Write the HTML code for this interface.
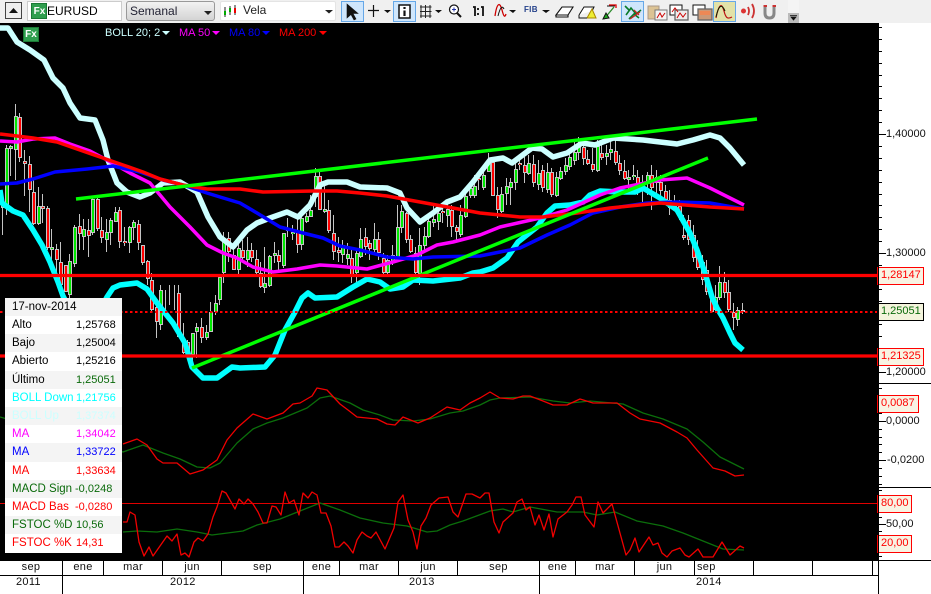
<!DOCTYPE html>
<html><head><meta charset="utf-8"><style>
html,body{margin:0;padding:0;background:#000}
#w{position:relative;width:931px;height:594px;overflow:hidden;background:#000;font:11px "Liberation Sans",sans-serif;color:#000}
#w div{position:absolute;box-sizing:border-box;white-space:nowrap}
svg{position:absolute;left:0;top:0}
.r{left:5px;width:117px;height:18.2px;line-height:18px;padding-left:7px;background:#fff;font-size:11.500px}
.g{background:#f4f4f4}
.r span{position:absolute;left:71px;top:0;font-size:11px}
.m{top:561px;height:14px;line-height:13px;text-align:center;color:#111;letter-spacing:.3px;font-size:11px}
.a{left:886px;color:#111;height:14px;line-height:14px}
.b{left:877px;height:18px;line-height:15px;padding-left:3px;border:1.5px solid #f00;background:#f8f3e3;color:#f00;font-size:11px}
</style></head><body><div id="w">

<div style="left:0;top:0;width:931px;height:23px;background:#f0f0f0"></div>
<div style="left:5px;top:2px;width:17px;height:17px;background:#eee;border:1px solid #444"></div>
<div style="left:27px;top:1px;width:95px;height:20px;background:#fff;border:1px solid #ccc"></div>
<div style="left:47px;top:4px;font-size:12px;line-height:14px">EURUSD</div>
<div style="left:126px;top:1px;width:89px;height:20px;background:linear-gradient(#f2f2f2,#d4d4d4);border:1px solid #999;border-radius:3px"></div>
<div style="left:130px;top:4px;font-size:12px;line-height:14px;color:#223">Semanal</div>
<div style="left:220px;top:1px;width:116px;height:20px;background:#fff;border:1px solid #e4e4e4;border-radius:2px"></div>
<div style="left:243px;top:3px;font-size:12px;line-height:14px;color:#222">Vela</div>
<div style="left:341px;top:1px;width:23px;height:21px;background:#cfe6fc;border:1px solid #66a8e8"></div>
<div style="left:393px;top:1px;width:23px;height:21px;background:#cfe6fc;border:1px solid #66a8e8"></div>
<div style="left:621px;top:1px;width:23px;height:21px;background:#cfe6fc;border:1px solid #66a8e8"></div>
<div style="left:713px;top:1px;width:23px;height:21px;background:#e2e2a8;border:1px solid #66a8e8"></div>
<div style="left:788px;top:0;width:11px;height:13px;background:#f4f4f4"></div>
<div style="left:788px;top:13px;width:11px;height:10px;background:#bbb"></div>
<div style="left:524px;top:4px;font:bold 8px/12px 'Liberation Sans',sans-serif;color:#23408a;letter-spacing:.3px">FIB</div>

<svg width="931" height="594" viewBox="0 0 931 594" fill="none">
<!-- toolbar icons -->
<path d="M9 13L13.500 8L18 13Z" fill="#111"/>
<rect x="31.500" y="3.500" width="15" height="15" fill="#2f9e4e" stroke="#1b7a35"/>
<path d="M204 12L208 16L212 12ZM325 11L329 14.500L333 11Z" fill="#222" transform="translate(0,-1)"/>
<path d="M225 7V17M230 6V15M235 5V15" stroke="#222"/>
<rect x="224" y="11" width="2" height="4" fill="#0a0"/><rect x="229" y="8" width="2" height="4" fill="#0a0"/><rect x="234" y="8" width="2" height="5" fill="#e00"/>
<path d="M347 4V18L351 14.500L354 20L356 19L353 13.500L358 13.500Z" fill="#111" stroke="#111" stroke-width=".6"/>
<path d="M373.500 5V17M368 10.500H379" stroke="#111" stroke-width="1.200"/>
<path d="M384 10L387.500 13L391 10ZM435 10L438.500 13L442 10ZM509 10L513 13L516 10ZM542 10L546 13L550 10Z" fill="#111"/>
<rect x="399" y="5" width="11" height="13" fill="#fff" stroke="#111" stroke-width="1.500"/><path d="M404.500 7V9M404.500 10.500V16" stroke="#111" stroke-width="2.200"/>
<path d="M421 5V18M425.500 5V18M430 5V18M420 7H431.500M420 11.500H431.500M420 16H431.500" stroke="#222"/>
<circle cx="454" cy="9.500" r="4.500" fill="#fff" stroke="#111" stroke-width="1.200"/><path d="M457 13L461 17" stroke="#111" stroke-width="2"/><path d="M452 9.500H456M454 7.500V11.500" stroke="#23a"/>
<path d="M473 7H475V16M481 7H483V16" stroke="#111" stroke-width="1.800"/><path d="M478 8V10M478 13V15" stroke="#111" stroke-width="1.800"/>
<path d="M495 16C497 2 500 2 502 10S505 17 506 14" stroke="#c00" stroke-width="1.300"/><path d="M498 16C500 8 502 5 504 9" stroke="#111"/>
<path d="M556 15L562 7H573L568 15ZM556 15V17H568L568 15" fill="#fff" stroke="#111" stroke-width="1.100"/>
<path d="M579 15L584 7H594L592 11" fill="#fff" stroke="#111"/><path d="M587 18L592 9L596 18Z" fill="#ee3" stroke="#a80"/><path d="M579 15V18H587" stroke="#111"/>
<path d="M604 19L614 7" stroke="#2a8a2a" stroke-width="1.300"/><path d="M607 6H615M603 19L606 13L609 18Z" fill="#2a2" stroke="#111"/><path d="M609 5H616V8" stroke="#d00" stroke-width="1.300"/>
<path d="M625 6L630 11M626 15L631 8L636 14L641 10M629 19L634 14L639 18" stroke="#0a7a2a" stroke-width="1.600"/><path d="M634 10L639 15M630 19L640 12" stroke="#c22" stroke-width="1.300"/>
<rect x="648" y="6" width="11" height="13" fill="#dcc394" stroke="#a98"/><rect x="655" y="10" width="12" height="10" fill="#f4f4f4" stroke="#777"/><path d="M657 18L660 13L662 17L665 13" stroke="#c00"/>
<rect x="670" y="5" width="12" height="10" fill="#fff" stroke="#111"/><rect x="675" y="10" width="13" height="10" fill="#eee" stroke="#666" stroke-width="1.300"/><path d="M672 12L675 8L678 12M677 18L680 13L683 17L686 13" stroke="#c00"/>
<rect x="693" y="5" width="12" height="10" fill="#fff" stroke="#111"/><rect x="698" y="9" width="14" height="11" fill="#c97" stroke="#666" stroke-width="1.300"/><rect x="700" y="11" width="10" height="4" fill="#e85"/>
<path d="M716 18C719 3 722 3 724 11S728 19 732 17" stroke="#b11" stroke-width="1.200"/><path d="M716 17C719 4 722 4 725 11" stroke="#120"/>
<circle cx="743.500" cy="11" r="2.500" fill="#d33"/><path d="M748 7Q750 11 748 15M752 4Q756 11 752 18" stroke="#c33" stroke-width="1.800"/>
<path d="M765 6V13Q765 18 769.500 18T774 13V6" stroke="#888" stroke-width="3"/><path d="M763.500 6H767M772.500 6H776" stroke="#c33" stroke-width="2"/>
<path d="M790 15.500H797M791 17H796L793.500 20Z" fill="#111" stroke="#111" stroke-width=".8"/>

<!-- candles -->
<g transform="translate(-.5,0)" stroke="#c4c4c4"><path d="M3 207V235M7 145V215M11 145V176M16 104V180M20 113V162M25 150V196M30 156V212M34 180V225M39 187V225M43 194V223M48 206V250M52 229V262M57 244V272M61 242V290M66 267V292M70 254V300M75 225V267M80 214V250M84 219V250M89 219V257M93 197V235M98 197V231M102 217V243M107 219V252M111 218V245M116 207V222M120 207V248M125 227V246M130 226V253M134 220V240M139 220V250M143 245V265M148 260V285M152 273V312M157 300V338M161 285V330M166 290V315M170 285V305M175 285V310M179 285V337M184 323V354M188 340V358M193 333V370M197 323V358M202 318V343M207 325V340M211 302V332M216 295V315M220 278V305M224 232V283M229 232V262M234 245V270M239 238V275M243 240V262M248 237V267M252 243V262M257 250V275M261 262V288M265 247V293M270 255V287M275 242V263M279 250V270M284 233V268M288 218V237M293 225V240M298 215V253M302 210V250M307 213V223M311 195V217M316 168V207M320 172V210M325 182V213M329 200V233M334 215V260M339 237V262M343 240V263M348 243V265M352 250V283M357 250V287M361 228V258M366 228V255M370 240V260M375 223V253M379 232V260M384 253V277M388 255V275M393 245V265M398 205V262M402 205V233M407 212V243M411 235V253M416 247V277M420 228V285M425 227V253M429 217V238M434 205V227M439 205V230M443 205V223M448 202V227M452 205V237M457 225V240M461 205V237M466 188V218M471 187V198M475 175V198M479 177V190M484 167V190M489 153V172M493 158V196M498 187V218M502 187V213M507 178V205M511 178V205M516 163V190M520 155V170M525 157V183M529 155V175M534 155V187M539 160V190M543 165V192M548 163V193M552 168V197M557 172V197M561 167V180M566 158V175M570 150V170M575 142V165M579 137V160M584 140V165M588 150V165M593 148V172M598 140V172M602 145V160M607 145V165M611 140V160M616 135V165M620 155V175M625 160V180M629 170V190M634 165V180M638 170V195M643 175V205M648 172V195M652 165V210M657 170V195M661 175V200M666 185V205M670 190V215M675 195V210M680 200V220M684 215V240M689 215V245M694 225V262M698 240V270M703 255V285M707 260V295M712 287V313M716 285V312M720 266V300M725 272V298M729 280V312M734 303V330M738 307V326M743 303V314"/></g>
<g shape-rendering="crispEdges">
<path stroke="#c4c4c4" stroke-width="4" d="M3 205V208M7 148V207M11 146V149M16 116V150M20 117V158M25 161V164M30 164V190M34 192V224M39 206V224M43 206V209M48 208V248M52 247V250M57 249V260M61 262V285M66 265V292M70 261V295M75 227V264M80 226V234M84 229V237M89 230V236M93 199V233M98 199V229M102 230V238M107 232V240M111 220V233M116 212V222M120 210V242M125 241V243M130 227V243M134 222V228M139 224V243M143 245V263M148 261V279M152 280V310M157 307V322M161 290V325M179 293V337M184 340V353M188 342V355M193 333V355M197 327V332M202 327V338M207 332V338M211 312V332M216 303V312M220 277V300M224 240V273M229 238V252M234 255V270M239 248V270M243 250V258M248 250V260M252 250V258M257 259V273M261 273V287M265 283V288M270 256V286M275 253V256M279 255V262M284 233V266M288 228V231M293 232V234M298 232V245M302 218V245M307 216V222M311 210V217M316 176V197M320 176V210M325 209V212M329 210V231M334 233V252M339 250V253M343 245V255M348 254V259M352 258V277M357 253V273M361 239V257M366 237V247M370 243V249M375 239V250M379 239V253M384 258V273M388 260V273M393 255V263M398 227V258M402 211V228M407 213V240M411 239V252M416 253V273M420 245V274M425 236V246M429 221V237M434 219V223M439 213V222M443 211V213M448 209V216M452 210V227M457 227V232M461 215V235M466 196V217M471 188V196M475 186V196M479 178V180M484 175V188M489 160V172M493 162V196M498 195V210M502 194V212M507 186V194M511 182V188M516 169V183M520 163V165M525 165V173M529 163V174M534 164V183M539 173V185M543 170V188M548 172V190M552 172V195M557 177V196M561 171V179M566 165V172M570 157V167M575 152V161M579 145V153M584 147V159M588 159V164M593 164V170M598 146V171M602 153V158M607 153V157M611 149V153M616 151V163M620 163V171M625 171V179M629 177V180M634 175V177M638 177V188M643 183V188M648 175V182M652 175V188M657 177V183M661 182V191M666 191V200M670 200V208M675 205V207M680 206V216M684 235V238M689 220V240M694 235V258M698 250V268M703 262V280M707 270V292M712 297V312M716 297V310M720 282V298M725 282V293M729 292V310M734 312V318M738 310V320M743 310V312"/>
<path stroke="#f00" stroke-width="2" d="M20 118V157M25 162V163M30 165V189M34 193V223M43 207V208M48 209V247M57 250V259M61 263V284M66 266V291M80 227V233M89 231V235M98 200V228M102 231V237M120 211V241M125 242V243M139 225V242M143 246V262M148 262V278M152 281V309M157 308V321M179 294V336M184 341V352M188 343V354M202 328V337M229 239V251M234 256V269M243 251V257M252 251V257M257 260V272M261 274V286M279 256V261M298 233V244M320 177V209M329 211V230M334 234V251M339 251V252M352 259V276M366 238V246M370 244V248M379 240V252M384 259V272M407 214V239M411 240V251M416 254V272M443 212V213M452 211V226M457 228V231M479 179V180M493 163V195M498 196V209M520 164V165M525 166V172M534 165V182M543 171V187M552 173V194M584 148V158M588 160V163M593 165V169M602 154V157M616 152V162M620 164V170M625 172V178M638 178V187M652 176V187M657 178V182M661 183V190M666 192V199M670 201V207M675 206V207M680 207V215M684 236V237M689 221V239M694 236V257M698 251V267M703 263V279M707 271V291M712 298V311M725 283V292M729 293V309M734 313V317M743 311V312"/>
<path stroke="#00e800" stroke-width="2" d="M3 206V207M7 149V206M11 147V148M16 117V149M39 207V223M52 248V249M70 262V294M75 228V263M84 230V236M93 200V232M107 233V239M111 221V232M116 213V221M130 228V242M134 223V227M161 291V324M193 334V354M197 328V331M207 333V337M211 313V331M216 304V311M220 278V299M224 241V272M239 249V269M248 251V259M265 284V287M270 257V285M275 254V255M284 234V265M288 229V230M293 233V234M302 219V244M307 217V221M311 211V216M316 177V196M325 210V211M343 246V254M348 255V258M357 254V272M361 240V256M375 240V249M388 261V272M393 256V262M398 228V257M402 212V227M420 246V273M425 237V245M429 222V236M434 220V222M439 214V221M448 210V215M461 216V234M466 197V216M471 189V195M475 187V195M484 176V187M489 161V171M502 195V211M507 187V193M511 183V187M516 170V182M529 164V173M539 174V184M548 173V189M557 178V195M561 172V178M566 166V171M570 158V166M575 153V160M579 146V152M598 147V170M607 154V156M611 150V152M629 178V179M634 176V177M643 184V187M648 176V181M716 298V309M720 283V297M738 311V319"/>
</g>

<g stroke-linejoin="round" stroke-linecap="butt">
<polyline stroke="#00ffff" stroke-width="5.500" points="0,190 2,203 13,211 23,215 33,230 42,245 50,262 58,282 63,296 70,310 100,310 107,297 113,288 120,285 137,283 147,289 157,303 173,323 185,343 192,367 203,378 217,378 232,367 240,368 265,367 275,355 285,330 295,312 302,298 308,293 315,298 337,297 353,287 367,279 380,282 390,289 403,287 413,280 433,281 460,278 473,273 480,272 493,268 507,258 518,242 537,227 547,213 555,206 570,205 583,202 590,195 600,191 620,192 635,192 643,188 660,198 677,210 690,233 697,250 705,273 712,297 717,308 723,318 730,333 735,343 743,350"/>
<polyline stroke="#ccffff" stroke-width="5.500" points="0,28 8,28 17,42 30,50 44,60 53,78 63,88 70,103 80,118 95,120 103,140 108,160 117,183 127,192 140,197 150,193 163,183 180,182 197,192 208,217 220,237 233,247 247,230 257,223 270,218 287,212 298,217 310,205 320,185 328,182 347,182 360,187 387,188 400,193 407,208 420,222 433,213 447,202 460,197 473,182 490,160 503,158 512,163 532,148 542,149 553,157 567,153 582,143 595,145 613,138 643,140 677,144 693,140 710,135 720,138 730,148 744,165"/>
<polyline stroke="#ff00ff" stroke-width="3.500" points="0,141 17,142 33,139 55,138 70,144 90,151 107,160 130,173 150,183 170,207 190,227 207,245 223,253 237,258 253,267 273,272 297,269 320,265 337,266 367,269 393,262 417,255 437,245 453,242 480,235 500,227 540,218 567,210 600,195 620,188 660,180 687,178 710,188 744,205"/>
<polyline stroke="#0000ff" stroke-width="3.500" points="0,184 17,183 33,179 55,172 87,169 113,166 140,172 163,180 183,185 207,193 220,197 240,203 257,213 280,227 303,233 323,238 340,246 360,250 387,257 413,259 433,257 480,256 520,248 547,235 570,225 593,213 620,207 647,203 677,202 710,203 744,209"/>
<polyline stroke="#ff0000" stroke-width="3.500" points="0,134 17,136 33,138 57,142 77,149 100,157 123,165 143,172 160,179 183,185 207,189 240,189 263,192 313,191 337,191 360,193 387,196 420,202 453,208 480,213 520,217 543,217 577,213 610,208 660,203 710,207 744,209"/>
<path stroke="#00ff00" stroke-width="3.500" d="M76 199L757 119M192 368L708 158"/>
<path stroke="#ff0000" stroke-width="3.200" d="M0 275.500H877M0 356H877"/>
<path stroke="#ff0000" stroke-width="2" stroke-dasharray="2.500 2.500" d="M0 312H877"/>
<path stroke="#e00000" stroke-width="1" d="M0 503.500H877"/>
<polyline stroke="#0b6e0b" stroke-width="1.300" points="0,417 123,452 143,445 163,453 180,459 197,467 210,468 220,463 237,443 253,429 267,423 283,418 307,408 320,398 330,396 350,403 363,410 380,415 393,420 413,421 430,419 450,413 463,411 480,405 490,400 500,398 530,397 553,401 570,403 590,401 623,404 643,413 663,419 687,429 703,442 720,457 744,469"/>
<polyline stroke="#f00000" stroke-width="1.300" points="123,444 137,439 147,445 157,459 163,463 177,463 190,474 203,470 217,460 227,440 237,428 253,414 267,419 283,413 293,404 300,403 312,396 317,388 327,390 340,404 348,410 357,417 377,419 387,424 395,425 403,417 418,423 430,418 447,407 460,410 470,403 480,398 490,392 500,398 513,399 523,396 530,396 543,401 553,405 567,405 580,399 593,403 617,403 630,413 640,419 660,423 677,432 687,438 697,450 713,468 725,471 735,476 744,475"/>
<polyline stroke="#0b6e0b" stroke-width="1.300" points="123,532 137,531 157,532 177,529 197,532 212,535 243,531 257,525 280,519 300,511 320,503 340,510 360,518 383,523 407,526 427,532 437,531 450,525 463,521 490,511 503,509 513,512 530,507 557,512 583,512 597,515 615,512 637,521 663,526 683,533 703,541 723,549 744,550"/>
<polyline stroke="#f00000" stroke-width="1.300" points="123,522 127,522 130,512 135,515 139,542 144,556 149,547 153,556 167,536 172,541 177,534 181,555 185,553 189,557 194,542 198,538 203,541 208,534 213,517 217,507 222,491 226,493 235,509 239,499 244,504 248,499 253,504 258,512 263,523 267,523 272,506 276,507 281,515 285,492 289,503 294,500 299,515 303,493 308,498 312,492 317,495 321,513 326,513 331,526 335,547 339,547 344,542 348,546 353,553 357,540 362,532 367,536 371,538 376,532 385,549 394,528 398,502 403,495 408,520 413,532 417,549 421,526 426,518 431,505 439,498 448,497 453,512 458,517 466,494 472,494 480,498 485,493 489,493 494,522 499,533 503,522 513,513 517,502 522,499 526,510 530,507 535,525 539,515 544,530 549,514 553,537 558,519 567,512 572,505 576,497 581,497 585,515 594,527 598,502 603,513 612,504 626,555 630,550 635,538 639,552 649,537 653,545 658,543 662,553 667,557 672,551 680,548 685,555 689,557 698,549 703,557 713,557 722,542 730,555 740,546 744,548"/>
</g>
</svg>

<!-- legend -->
<div style="left:23px;top:27px;width:16px;height:15px;background:#2f9e4e;border:1px solid #1b7a35;color:#fff;font:bold 10px/13px 'Liberation Sans',sans-serif;text-align:center">Fx</div>
<div style="left:32px;top:4px;width:15px;height:15px;color:#fff;font:bold 10px/15px 'Liberation Sans',sans-serif;text-align:center">Fx</div>
<div style="left:105px;top:26px;color:#ccffff;line-height:14px">BOLL 20; 2</div>
<div style="left:179px;top:26px;color:#ff00ff;line-height:14px">MA 50</div>
<div style="left:229px;top:26px;color:#0000ff;line-height:14px">MA 80</div>
<div style="left:279px;top:26px;color:#ff0000;line-height:14px">MA 200</div>
<svg width="931" height="60"><path d="M162 31H170L166 35Z" fill="#ccffff"/><path d="M212 31H220L216 35Z" fill="#f0f"/><path d="M262 31H270L266 35Z" fill="#00f"/><path d="M319 31H327L323 35Z" fill="#f00"/></svg>

<!-- info panel -->
<div class="r g" style="top:298px;height:18px;">17-nov-2014</div>
<div class="r" style="top:316px">Alto<span>1,25768</span></div>
<div class="r g" style="top:334.200px">Bajo<span>1,25004</span></div>
<div class="r" style="top:352.400px">Abierto<span>1,25216</span></div>
<div class="r g" style="top:370.600px">Último<span style="color:#0a6a0a">1,25051</span></div>
<div class="r" style="top:388.800px;color:#00ffff">BOLL Down<span>1,21756</span></div>
<div class="r g" style="top:407px;color:#ccffff">BOLL Up<span>1,37374</span></div>
<div class="r" style="top:425.200px;color:#ff00ff">MA<span>1,34042</span></div>
<div class="r g" style="top:443.400px;color:#0000ff">MA<span>1,33722</span></div>
<div class="r" style="top:461.600px;color:#ff0000">MA<span>1,33634</span></div>
<div class="r g" style="top:479.800px;color:#0a6a0a">MACD Sign<span style="left:70px">-0,0248</span></div>
<div class="r" style="top:498px;color:#ff0000">MACD Bas<span style="left:70px">-0,0280</span></div>
<div class="r g" style="top:516.200px;color:#0a6a0a">FSTOC %D<span>10,56</span></div>
<div class="r" style="top:534.400px;height:19px;color:#ff0000">FSTOC %K<span>14,31</span></div>

<!-- right axis -->
<div style="left:878px;top:23px;width:53px;height:571px;background:#fff"></div>
<svg width="931" height="594" fill="none"><path stroke="#000" d="M878 27.500H882M878 39.500H882M878 51.500H882M878 63.500H882M878 75.500H882M878 86.500H882M878 98.500H882M878 110.500H882M878 122.500H882M878 134.500H886M878 146.500H882M878 158.500H882M878 170.500H882M878 182.500H882M878 194.500H882M878 205.500H882M878 217.500H882M878 229.500H882M878 241.500H882M878 253.500H886M878 265.500H882M878 289.500H882M878 301.500H882M878 324.500H882M878 336.500H882M878 348.500H882M878 372.500H886M878 383.500H931M878 388.500H882M878 413.500H882M878 421.500H886M878 429.500H882M878 437.500H882M878 444.500H882M878 452.500H882M878 460.500H886M878 468.500H882M878 476.500H882M878 484.500H882M878 487.500H931M878 490.500H882M878 517.500H882M878 524.500H886M878 531.500H882M878 556.500H882"/></svg>
<div class="a" style="top:127px">1,40000</div>
<div class="a" style="top:246px">1,30000</div>
<div class="a" style="top:365px">1,20000</div>
<div class="a" style="top:414px;left:886px">0,0000</div>
<div class="a" style="top:453px;left:887px">-0,0200</div>
<div class="a" style="top:517px;left:886px">50,00</div>
<div class="b" style="top:267px;width:47px">1,28147</div>
<div class="b" style="top:303px;width:47px;border-color:#000;background:#f4f4dc;color:#0a6a0a">1,25051</div>
<div class="b" style="top:348px;width:47px">1,21325</div>
<div class="b" style="top:395px;width:42px">0,0087</div>
<div class="b" style="top:495px;width:35px">80,00</div>
<div class="b" style="top:535px;width:35px">20,00</div>

<!-- date axis -->
<div style="left:0;top:560px;width:878px;height:34px;background:#fff;border-top:1px solid #000"></div>
<svg width="931" height="594" fill="none"><path stroke="#000" d="M0 575.500H878M878 560.500H931M878.500 23V594M62.500 561V594M103.500 561V575M162.500 561V575M221.500 561V575M303.500 561V594M339.500 561V575M398.500 561V575M457.500 561V575M539.500 561V594M575.500 561V575M634.500 561V575M694.500 561V575M753.500 561V575M812.500 561V575M872.500 561V575"/></svg>
<div class="m" style="left:0;width:62px">sep</div>
<div class="m" style="left:63px;width:40px">ene</div>
<div class="m" style="left:104px;width:58px">mar</div>
<div class="m" style="left:163px;width:58px">jun</div>
<div class="m" style="left:222px;width:81px">sep</div>
<div class="m" style="left:304px;width:35px">ene</div>
<div class="m" style="left:340px;width:58px">mar</div>
<div class="m" style="left:399px;width:58px">jun</div>
<div class="m" style="left:458px;width:81px">sep</div>
<div class="m" style="left:540px;width:35px">ene</div>
<div class="m" style="left:576px;width:58px">mar</div>
<div class="m" style="left:635px;width:59px">jun</div>
<div class="m" style="left:697px">sep</div>
<div class="m" style="left:16px;top:576px">2011</div>
<div class="m" style="left:170px;top:576px">2012</div>
<div class="m" style="left:409px;top:576px">2013</div>
<div class="m" style="left:696px;top:576px">2014</div>
</div></body></html>
